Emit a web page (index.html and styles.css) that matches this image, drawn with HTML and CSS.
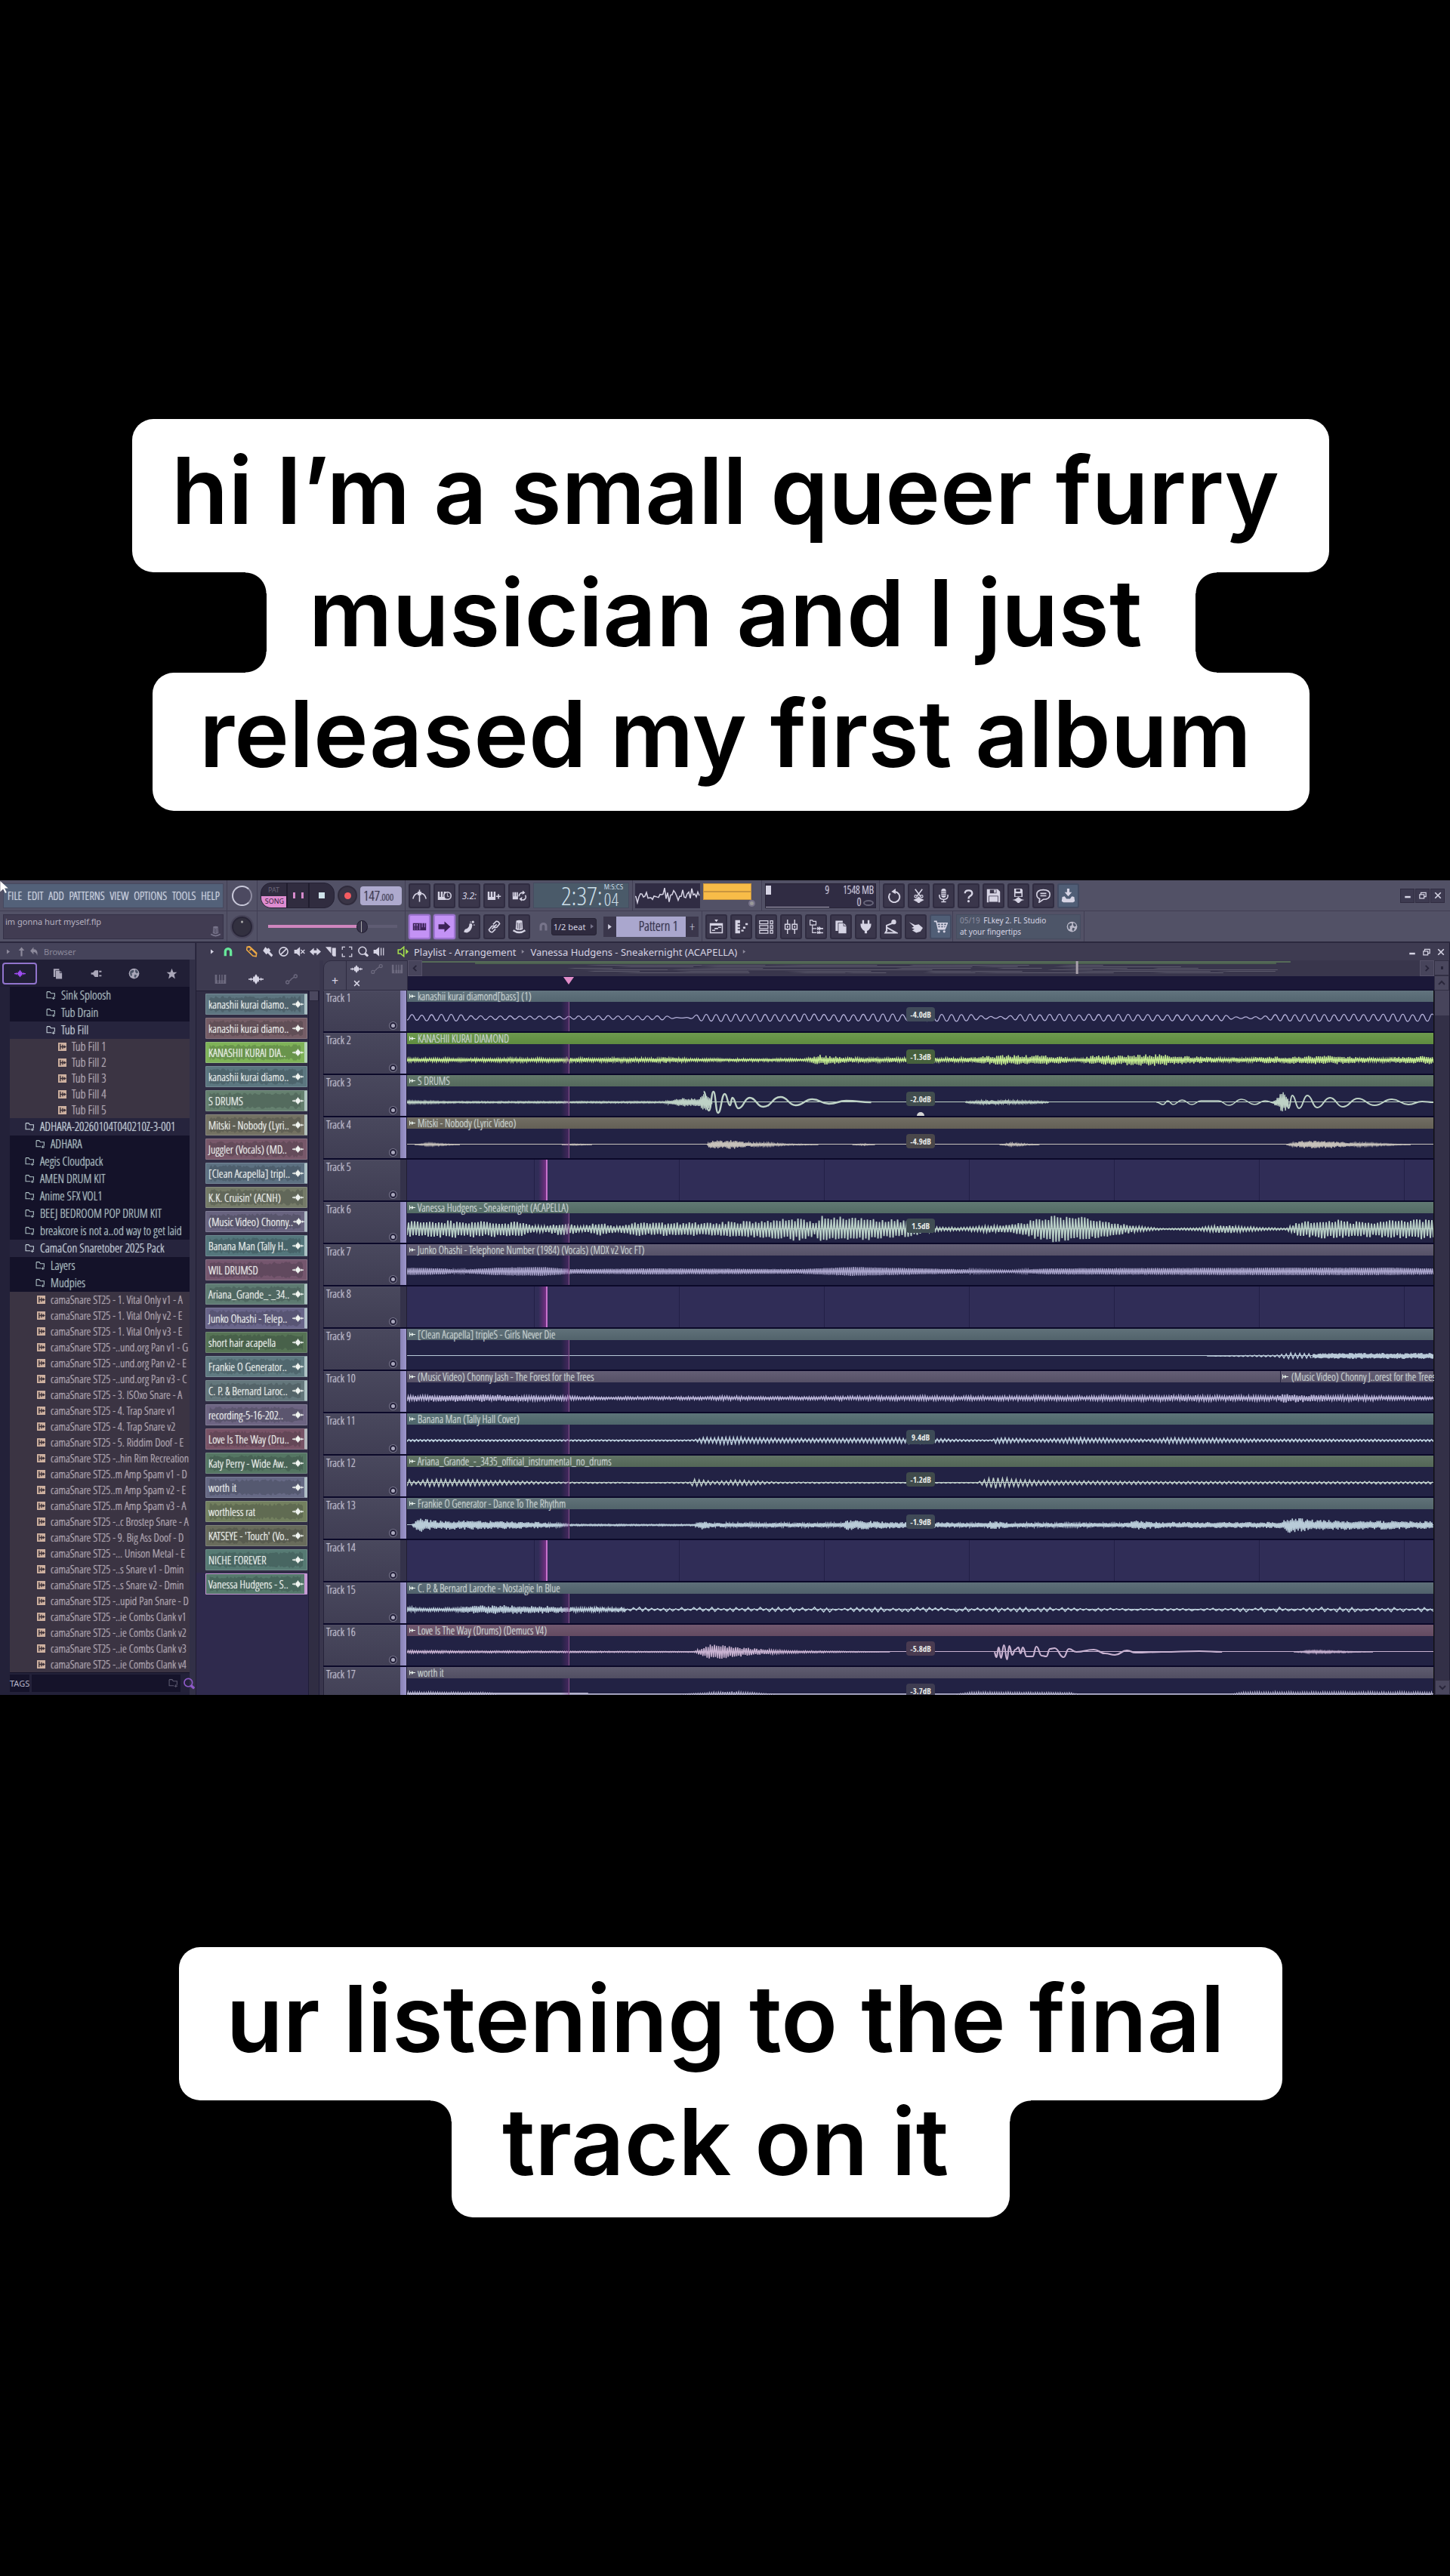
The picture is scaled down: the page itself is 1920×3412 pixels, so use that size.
FILE: index.html
```html
<!DOCTYPE html>
<html lang="en">
<head>
<meta charset="utf-8">
<title>Playlist - Arrangement</title>
<link rel="stylesheet" href="styles.css">
</head>
<body>
<svg class="sprite" aria-hidden="true">
  <symbol id="wave" viewBox="0 0 24 16"><path d="M0 7h3l1-2 1 2h2l1-4 1 2 1-2 2-3 2 3 1 2 1-2 1 4h2l1-2 1 2h3v2h-3l-1 2-1-2h-2l-1 4-1-2-1 2-2 3-2-3-1-2-1 2-1-4H5l-1 2-1-2H0z"/></symbol>
  <symbol id="keys" viewBox="0 0 24 20"><path d="M1 1h22v18H1z M5 1v11h1v6h2v-6h1V1z M11 1v11h1v6h1v-6h1V1z M16 1v11h1v6h1v-6h1V1z" fill-rule="evenodd"/></symbol>
  <symbol id="auto" viewBox="0 0 24 20"><g fill="none" stroke="currentColor" stroke-width="2"><circle cx="4" cy="16" r="3"/><circle cx="20" cy="4" r="3"/><path d="M7 14l4-3v-1l6-4"/></g></symbol>
  <symbol id="metro" viewBox="0 0 24 24"><path d="M11 2h2v3h2v6h-2v11h-2V11H9V5h2z"/><path d="M1 17q2-8 8-9M23 17q-2-8-8-9" fill="none" stroke="currentColor" stroke-width="2"/></symbol>
  <symbol id="waitkey" viewBox="0 0 24 24"><path d="M1 5h13v14H1z M4 5v9h2V5zM9 5v9h2V5z" fill-rule="evenodd"/><circle cx="17" cy="12" r="6" fill="#3a364b" stroke="currentColor" stroke-width="2"/><path d="M17 8v5h3" fill="none" stroke="currentColor" stroke-width="1"/></symbol>
  <symbol id="keyplus" viewBox="0 0 24 24"><path d="M1 5h13v14H1z M4 5v9h2V5zM9 5v9h2V5z" fill-rule="evenodd"/><path d="M18 9h2v3h3v2h-3v3h-2v-3h-3v-2h3z"/></symbol>
  <symbol id="keyloop" viewBox="0 0 24 24"><path d="M1 6h9v12H1z M3 6v7h1V6zM7 6v7h1V6z" fill-rule="evenodd"/><path d="M12 13a5 5 0 0 1 8-5M22 11a5 5 0 0 1-8 6" fill="none" stroke="currentColor" stroke-width="2"/><path d="M18 3l4 4-5 3zM16 21l-4-4 5-3z"/></symbol>
  <symbol id="padkeys" viewBox="0 0 24 24"><path d="M1 6h22v12H1z M3 8v2h2V8zM7 8v2h2V8zM3 12v1h2v-1zM7 12v1h2v-1zM3 15v1h2v-1zM7 15v1h2v-1zM12 7v10h1V7zM16 6v7h1V6zM20 6v7h1V6z" fill-rule="evenodd"/></symbol>
  <symbol id="arrow" viewBox="0 0 24 24"><path d="M2 8h10V3l10 9-10 9v-5H2z"/></symbol>
  <symbol id="foot" viewBox="0 0 24 24"><path d="M3 21q0-5 5-6 4-2 4-8 4-2 5 2-1 10-9 13z"/><circle cx="14" cy="4" r="1"/><circle cx="18" cy="4" r="2"/><circle cx="20" cy="9" r="1"/></symbol>
  <symbol id="link" viewBox="0 0 24 24"><g fill="none" stroke="currentColor" stroke-width="2"><path d="M10 8l5-5q4-1 6 4l-5 6q-3 1-5 0M14 16l-5 5q-4 1-6-4l5-6q3-1 5 0M8 16l8-8"/></g></symbol>
  <symbol id="hat" viewBox="0 0 24 24"><path d="M7 2q5-2 10 0l1 14q-6 3-12 0z"/><path d="M2 18q10 7 20 0" fill="none" stroke="currentColor" stroke-width="3"/><path d="M9 5v10M12 6v10M15 5v10" stroke="#3a364b" stroke-width="1"/></symbol>
  <symbol id="magnet" viewBox="0 0 24 24"><path d="M4 20V11a8 8 0 0 1 16 0v9h-5v-9a3 3 0 0 0-6 0v9z"/></symbol>
  <symbol id="playlist" viewBox="0 0 24 24"><path d="M9 0h6l-3 4zM1 6h22v17H1z M3 10v11h18V10z" fill-rule="evenodd"/><path d="M5 17h5v2H5zM9 14h6v2H9zM15 12h5v2h-5z"/></symbol>
  <symbol id="roll" viewBox="0 0 24 24"><path d="M2 1h8v5H6v2h4v3H6v2h4v3H6v2h4v5H2zM12 17h4v3h-4zM15 12h4v3h-4zM19 6h4v3h-4z"/></symbol>
  <symbol id="rack" viewBox="0 0 24 24"><path d="M1 2h14v5H1zM1 10h14v5H1zM1 18h14v5H1zM19 2h4v5h-4zM19 10h4v5h-4zM19 18h4v5h-4z" fill="none" stroke="currentColor" stroke-width="1.6"/></symbol>
  <symbol id="mixer" viewBox="0 0 24 24"><path d="M6 0v8M6 16v8M18 0v8M18 16v8M2 8h8v8H2zM14 8h8v8h-8zM6 10v4M18 10v4" fill="none" stroke="currentColor" stroke-width="1.8"/></symbol>
  <symbol id="tree" viewBox="0 0 24 24"><path d="M2 1h4l1 2h5v6H2zM6 9v13h7M6 15h7" fill="none" stroke="currentColor" stroke-width="1.5"/><path d="M14 12l3 2v-3l3 3h4v2h-4l-3 3v-3l-3 2zM14 19l3 2v-3l3 3h4v2h-4l-3 1v-1l-3 1z"/></symbol>
  <symbol id="copy" viewBox="0 0 24 24"><path d="M3 2h12v3H7v14H3z"/><path d="M8 6h8v5h5v12H8zM17 6l4 4h-4z"/></symbol>
  <symbol id="plug" viewBox="0 0 24 24"><path d="M6 1h3v6h6V1h3v6h3q0 9-7 12v4h-4v-4Q3 16 3 7h3z"/></symbol>
  <symbol id="toy" viewBox="0 0 24 24"><circle cx="17" cy="4" r="4"/><path d="M15 6L5 10v8M5 13l16 9H3l3-5" fill="none" stroke="currentColor" stroke-width="2.5"/></symbol>
  <symbol id="hand" viewBox="0 0 24 24"><path d="M1 4l10 5 6-1 7 6-4 6-7 2-7-4 4-2-5-2 4-2z"/></symbol>
  <symbol id="cart" viewBox="0 0 24 24"><path d="M1 3h4l3 13h12M6 6h17l-3 8H8M12 6v8M17 6v8M7 10h14" fill="none" stroke="currentColor" stroke-width="2"/><circle cx="9" cy="20" r="2"/><circle cx="18" cy="20" r="2"/></symbol>
  <symbol id="undo" viewBox="0 0 24 24"><path d="M14 5a9 9 0 1 1-8 3" fill="none" stroke="currentColor" stroke-width="2.5"/><path d="M8 5l7-5v9z"/></symbol>
  <symbol id="cut" viewBox="0 0 24 24"><path d="M6 1l9 12M18 1L9 13" stroke="currentColor" stroke-width="2"/><circle cx="7" cy="13" r="2" fill="none" stroke="currentColor" stroke-width="1.5"/><circle cx="17" cy="13" r="2" fill="none" stroke="currentColor" stroke-width="1.5"/><path d="M3 19l4-2 2-1 3-3 3 3 2 1 4 2-4 2-2 1-3 3-3-3-2-1z"/></symbol>
  <symbol id="mic" viewBox="0 0 24 24"><rect x="8" y="0" width="8" height="15" rx="4"/><path d="M5 10v3q1 5 7 5t7-5v-3M12 18v4M8 22h8" fill="none" stroke="currentColor" stroke-width="2"/><path d="M8 5h8M8 8h8M8 11h8" stroke="#3a364b" stroke-width="1"/></symbol>
  <symbol id="help" viewBox="0 0 24 24"><path d="M6 8q0-5 6-5t6 5q0 3-4 5-2 1-2 4" fill="none" stroke="currentColor" stroke-width="3"/><circle cx="12" cy="21" r="2"/></symbol>
  <symbol id="save" viewBox="0 0 24 24"><path d="M1 1h18l4 4v18H1z M6 2v6h11V2z M4 12v11h16V12z" fill-rule="evenodd"/><path d="M13 2h3v5h-3zM5 13h14v9H5z"/></symbol>
  <symbol id="savewave" viewBox="0 0 24 24"><path d="M5 0h12l2 2v12H5z M8 1v4h7V1z M7 8v5h10V8z" fill-rule="evenodd"/><path d="M2 19l4-1 2-1 1-1 3-2 3 2 1 1 2 1 4 1-4 1-2 1-1 1-3 3-3-3-1-1-2-1z"/></symbol>
  <symbol id="chat" viewBox="0 0 24 24"><path d="M12 2c7 0 11 3 11 8s-4 8-11 8l-7 5 1-6q-5-2-5-7c0-5 4-8 11-8z M7 8h10M7 12h10" fill="none" stroke="currentColor" stroke-width="2"/></symbol>
  <symbol id="down" viewBox="0 0 24 24"><path d="M10 0h4v6h4l-6 7-6-7h4zM2 14l4-1 3 4h6l3-4 4 1 1 7-3 2H4l-3-2z"/></symbol>
  <symbol id="globe" viewBox="0 0 24 24"><circle cx="12" cy="12" r="11"/><path d="M4 7q5-4 8-2l-1 4-4 2 1 4-2 3q-4-5-2-11zM15 3q5 2 6 7l-4 2-3-4zM13 14l5 1-3 6-3-2z" fill="#4d5568"/></symbol>
  <symbol id="folder" viewBox="0 0 24 24"><path d="M2 3h7l3 4h9v9M2 3v15h11M18 15v7M14 19h8" fill="none" stroke="currentColor" stroke-width="2"/></symbol>
  <symbol id="sample" viewBox="0 0 24 24"><path d="M0 0h24v24H0z"/><path d="M6 4v16M6 12h15M13 6v12M17 9l4 3-4 3" fill="none" stroke="#3b3038" stroke-width="3"/></symbol>
  <symbol id="clip" viewBox="0 0 16 12"><path d="M0 0h2v4l4 1V1l5 4h5v2h-5l-5 4V7L2 8v4H0z"/></symbol>
  <symbol id="speaker" viewBox="0 0 24 24"><path d="M2 8h5l7-6v20l-7-6H2z" fill="none" stroke="currentColor" stroke-width="2.5"/><path d="M18 6l6 6-6 6z"/></symbol>
  <symbol id="pencil" viewBox="0 0 24 24"><path d="M2 2l5-1 15 14-1 7-7-1L1 8zM2 2l6 1 14 14M7 10l5-5" fill="none" stroke="currentColor" stroke-width="2.5"/></symbol>
  <symbol id="brush" viewBox="0 0 24 24"><path d="M2 10l5-8 4 4 3-2 4 5-2 3 7 7-3 4-8-8-3 3z"/></symbol>
  <symbol id="ban" viewBox="0 0 24 24"><path d="M19 5L5 19" stroke="currentColor" stroke-width="2.5"/><circle cx="12" cy="12" r="9" fill="none" stroke="currentColor" stroke-width="2.5"/></symbol>
  <symbol id="mute" viewBox="0 0 24 24"><path d="M1 8h5l7-6v20l-7-6H1z"/><path d="M15 8l8 8M23 8l-8 8" stroke="currentColor" stroke-width="2"/></symbol>
  <symbol id="slip" viewBox="0 0 24 24"><path d="M0 12l9-8v5h6V4l9 8-9 8v-5H9v5z"/></symbol>
  <symbol id="slice" viewBox="0 0 24 24"><path d="M0 2h12v14zM14 4h8v18h-5l-3-3z"/></symbol>
  <symbol id="select" viewBox="0 0 24 24"><path d="M8 2H2v6M16 2h6v6M8 22H2v-6M16 22h6v-6" fill="none" stroke="currentColor" stroke-width="2"/></symbol>
  <symbol id="lens" viewBox="0 0 24 24"><circle cx="11" cy="10" r="8" fill="none" stroke="currentColor" stroke-width="2.5"/><path d="M15 17l6 5 2-2-5-5" stroke="currentColor" stroke-width="2"/></symbol>
  <symbol id="playwave" viewBox="0 0 24 24"><path d="M1 8h5l7-6v20l-7-6H1zM16 4h2v16h-2zM21 4h2v16h-2z"/></symbol>
  <symbol id="plugtab" viewBox="0 0 24 24"><path d="M1 10h4l4-5h7v14H9l-4-5H1zM18 6h5v3h-5zM18 15h5v3h-5z"/></symbol>
  <symbol id="star" viewBox="0 0 24 24"><path d="M12 1l3 8h8l-6 5 2 9-7-5-7 5 2-9-6-5h8z"/></symbol>
  <symbol id="min" viewBox="0 0 24 24"><path d="M3 14h18v6H3z"/></symbol>
  <symbol id="restore" viewBox="0 0 24 24"><path d="M2 9h14v12H2zM6 8V3h16v13h-5" fill="none" stroke="currentColor" stroke-width="3"/></symbol>
  <symbol id="close" viewBox="0 0 24 24"><path d="M3 3l18 18M21 3L3 21" stroke="currentColor" stroke-width="4"/></symbol>
  <symbol id="up" viewBox="0 0 24 24"><path d="M12 1l7 8h-5v14h-4V9H5z"/></symbol>
  <symbol id="back" viewBox="0 0 24 24"><path d="M10 1v5q12 0 9 16-2-9-9-9v6L2 10z"/></symbol>
  <symbol id="tri" viewBox="0 0 12 12"><path d="M2 0l8 6-8 6z"/></symbol>
  <symbol id="chev" viewBox="0 0 12 12"><path d="M4 2l4 4-4 4" fill="none" stroke="currentColor" stroke-width="2"/></symbol>
</svg>

<section class="caption caption-top">
  <span class="line line-1">hi I’m a small queer furry</span>
  <span class="line line-2 notch">musician and I just</span>
  <span class="line line-3">released my first album</span>
</section>

<main class="app">
  <svg class="cursor" viewBox="0 0 12 18" aria-hidden="true"><path d="M0 0v15l4-4 3 6 2-1-3-6h5z" fill="#fff"/></svg>
  <header class="toolbar">
    <div class="bar">
      <div class="group g-menu">
        <nav class="menu"><a href="#">FILE</a><a href="#">EDIT</a><a href="#">ADD</a><a href="#">PATTERNS</a><a href="#">VIEW</a><a href="#">OPTIONS</a><a href="#">TOOLS</a><a href="#">HELP</a></nav>
      </div>
      <div class="group g-knob"><span class="knob knob-main"></span></div>
      <div class="group g-transport">
        <div class="transport">
          <button class="mode"><span>PAT</span><b>SONG</b></button>
          <button class="pause" aria-label="Pause"></button>
          <button class="stop" aria-label="Stop"></button>
        </div>
        <button class="record" aria-label="Record"></button>
        <output class="tempo">147<small>.000</small></output>
      </div>
      <div class="group g-btns">
        <button class="tb" aria-label="Metronome"><svg><use href="#metro"/></svg></button>
        <button class="tb" aria-label="Wait for input"><svg><use href="#waitkey"/></svg></button>
        <button class="tb count">3.2:</button>
        <button class="tb" aria-label="Blend notes"><svg><use href="#keyplus"/></svg></button>
        <button class="tb" aria-label="Loop record"><svg><use href="#keyloop"/></svg></button>
        <output class="clock">2:37:<span><small>M:S:CS</small><i>04</i></span></output>
      </div>
      <div class="group g-scope">
        <svg class="scope" viewBox="0 0 86 33" preserveAspectRatio="none"></svg>
        <div class="meters"><i></i><i></i><span class="dial"></span></div>
      </div>
      <div class="group g-cpu">
        <div class="cpu">
          <div class="cpu-load"><i></i><span>9</span></div>
          <div class="cpu-mem"><span>1548 MB</span><span>0 <em></em></span></div>
        </div>
      </div>
      <div class="group g-tools">
        <button class="tb" aria-label="Undo"><svg><use href="#undo"/></svg></button>
        <button class="tb" aria-label="Cut"><svg><use href="#cut"/></svg></button>
        <button class="tb" aria-label="Record audio"><svg><use href="#mic"/></svg></button>
        <button class="tb" aria-label="Help"><svg><use href="#help"/></svg></button>
        <button class="tb" aria-label="Save"><svg><use href="#save"/></svg></button>
        <button class="tb" aria-label="Export"><svg><use href="#savewave"/></svg></button>
        <button class="tb" aria-label="Messages"><svg><use href="#chat"/></svg></button>
        <button class="tb teal" aria-label="Download"><svg><use href="#down"/></svg></button>
      </div>
      <div class="window-btns">
        <button aria-label="Minimize"><svg><use href="#min"/></svg></button>
        <button aria-label="Restore"><svg><use href="#restore"/></svg></button>
        <button aria-label="Close"><svg><use href="#close"/></svg></button>
      </div>
    </div>
    <div class="bar">
      <div class="group g-menu"><div class="hint">im gonna hurt myself.flp<svg><use href="#hat"/></svg></div></div>
      <div class="group g-knob"><span class="knob"></span></div>
      <div class="group g-transport"><input class="pos" type="range" min="0" max="100" value="75" aria-label="Song position"></div>
      <div class="group g-pattern">
        <button class="tb lit" aria-label="Typing keyboard"><svg><use href="#padkeys"/></svg></button>
        <button class="tb lit" aria-label="Follow playback"><svg><use href="#arrow"/></svg></button>
        <button class="tb" aria-label="Step edit"><svg><use href="#foot"/></svg></button>
        <button class="tb" aria-label="Link"><svg><use href="#link"/></svg></button>
        <button class="tb" aria-label="Magic hat"><svg><use href="#hat"/></svg></button>
        <svg class="snap-icon"><use href="#magnet"/></svg>
        <button class="snap">1/2 beat<svg><use href="#tri"/></svg></button>
        <div class="pattern"><button aria-label="Pattern menu"><svg><use href="#tri"/></svg></button><span>Pattern 1</span><button>+</button></div>
      </div>
      <div class="group g-panels">
        <button class="tb" aria-label="Playlist"><svg><use href="#playlist"/></svg></button>
        <button class="tb" aria-label="Piano roll"><svg><use href="#roll"/></svg></button>
        <button class="tb" aria-label="Channel rack"><svg><use href="#rack"/></svg></button>
        <button class="tb" aria-label="Mixer"><svg><use href="#mixer"/></svg></button>
        <button class="tb" aria-label="Browser"><svg><use href="#tree"/></svg></button>
        <button class="tb" aria-label="Plugin database"><svg><use href="#copy"/></svg></button>
        <button class="tb" aria-label="Plugins"><svg><use href="#plug"/></svg></button>
        <button class="tb" aria-label="Tempo tapper"><svg><use href="#toy"/></svg></button>
        <button class="tb" aria-label="Touch"><svg><use href="#hand"/></svg></button>
        <button class="tb teal" aria-label="Shop"><svg><use href="#cart"/></svg></button>
      </div>
      <div class="group g-news"><a class="news" href="#"><span><em>05/19</em> FLkey 2. FL Studio<br>at your fingertips</span><svg><use href="#globe"/></svg></a></div>
    </div>
  </header>

  <div class="work">
    <aside class="browser">
      <div class="browser-head"><svg class="s10"><use href="#tri"/></svg><svg class="s13"><use href="#up"/></svg><svg class="s13"><use href="#back"/></svg><span>Browser</span></div>
      <div class="browser-tabs">
        <button class="on" aria-label="Sounds"><svg><use href="#wave"/></svg></button>
        <button aria-label="Files"><svg><use href="#copy"/></svg></button>
        <button aria-label="Plugins"><svg><use href="#plugtab"/></svg></button>
        <button aria-label="Online"><svg><use href="#globe"/></svg></button>
        <button aria-label="Starred"><svg><use href="#star"/></svg></button>
      </div>
      <ul class="files"></ul>
      <div class="tags"><button>TAGS</button><label><input type="text" aria-label="Search tags"><svg><use href="#folder"/></svg></label><button class="find" aria-label="Find"><svg><use href="#lens"/></svg></button></div>
    </aside>

    <section class="playlist">
      <div class="titlebar">
        <svg class="s10"><use href="#tri"/></svg>
        <svg class="mint"><use href="#magnet"/></svg>
        <div class="tools">
          <svg class="amber"><use href="#pencil"/></svg><svg><use href="#brush"/></svg><svg><use href="#ban"/></svg><svg><use href="#mute"/></svg><svg><use href="#slip"/></svg><svg><use href="#slice"/></svg><svg><use href="#select"/></svg><svg><use href="#lens"/></svg><svg><use href="#playwave"/></svg>
        </div>
        <svg class="lime"><use href="#speaker"/></svg>
        <h1>Playlist - Arrangement <svg><use href="#tri"/></svg> Vanessa Hudgens - Sneakernight (ACAPELLA) <svg><use href="#tri"/></svg></h1>
        <div class="title-btns"><svg><use href="#min"/></svg><svg><use href="#restore"/></svg><svg><use href="#close"/></svg></div>
      </div>
      <div class="panes">
        <div class="picker">
          <div class="picker-tabs"><svg class="dim"><use href="#keys"/></svg><svg><use href="#wave"/></svg><svg class="dim"><use href="#auto"/></svg></div>
          <div class="picker-body"><ul class="clips"></ul><div class="picker-scroll"><i></i></div></div>
        </div>
        <div class="arrange">
          <div class="arrange-head">
            <div class="corner">
              <button>+</button>
              <div class="corner-grid"><svg><use href="#wave"/></svg><svg class="dim"><use href="#auto"/></svg><svg class="dim"><use href="#keys"/></svg><svg class="x"><use href="#close"/></svg></div>
            </div>
            <div class="timeline">
              <div class="minimap"><button aria-label="Scroll left"><svg class="flip"><use href="#chev"/></svg></button><svg class="map" viewBox="0 0 1320 21" preserveAspectRatio="none"></svg><button aria-label="Scroll right"><svg><use href="#chev"/></svg></button></div>
              <div class="ruler"><i class="marker"></i></div>
            </div>
            <div class="scroll-top"><button aria-label="Zoom"><b></b></button><button aria-label="Scroll up"><svg class="rot-up"><use href="#chev"/></svg></button></div>
          </div>
          <div class="arrange-body">
            <div class="tracks"></div>
            <div class="vscroll"><i></i><button aria-label="Scroll down"><svg class="rot-down"><use href="#chev"/></svg></button></div>
          </div>
        </div>
      </div>
    </section>
  </div>
</main>

<section class="caption caption-bottom">
  <span class="line line-4">ur listening to the final</span>
  <span class="line line-5 notch">track on it</span>
</section>
<script src="script.js"></script>
</body>
</html>
```
FILE: styles.css
```css
:root {
  --narrow: "Open Sans Condensed Light", "Open Sans Condensed", "Liberation Sans Narrow", "Noto Sans", sans-serif;
  --narrow-bold: "Open Sans Condensed", "Liberation Sans Narrow", "Noto Sans", sans-serif;
  --ui: "Noto Sans", sans-serif;
  --bar: #525166;
  --panel: #3d3a50;
  --ink: #d6d4e4;
}
* { box-sizing: border-box; }
body { margin: 0; background: #000; font-family: var(--ui); font-size: 12px; color: var(--ink); }
svg { fill: currentColor; display: block; flex: none; }
.sprite { display: none; }
button { border: 0; padding: 0; margin: 0; font: inherit; color: inherit; background: none; display: flex; align-items: center; justify-content: center; }
ul { list-style: none; margin: 0; padding: 0; }
a { color: inherit; text-decoration: none; }

/* captions */
.caption { display: flex; flex-direction: column; align-items: center; padding-left: 15px; color: #000; font-family: Inter, sans-serif; font-weight: 600; font-size: 123px; line-height: 161px; white-space: nowrap; }
.caption-top { padding-top: 555px; padding-bottom: 92px; }
.caption-bottom { padding-top: 334px; padding-bottom: 475px; }
.line { position: relative; background: #fff; border-radius: 28px; text-align: center; padding-right: 14px; }
.line-1 { width: 1585px; height: 203px; padding-top: 14px; }
.line-2 { width: 1230px; height: 133px; line-height: 107px; border-radius: 0; }
.line-3 { width: 1532px; height: 183px; line-height: 162px; }
.line-4 { width: 1461px; height: 203px; padding-top: 14px; }
.line-5 { width: 739px; height: 155px; line-height: 109px; border-radius: 0 0 28px 28px; }
.notch::before, .notch::after { content: ""; position: absolute; top: 0; bottom: 0; width: 28px; }
.notch::before { right: 100%; background: radial-gradient(circle at 0 28px, transparent 27px, #fff 28px) top / 28px 28px no-repeat, radial-gradient(circle at 0 0, transparent 27px, #fff 28px) bottom / 28px 28px no-repeat; }
.notch::after { left: 100%; background: radial-gradient(circle at 100% 28px, transparent 27px, #fff 28px) top / 28px 28px no-repeat, radial-gradient(circle at 100% 0, transparent 27px, #fff 28px) bottom / 28px 28px no-repeat; }
.line-5::before, .line-5::after { bottom: auto; height: 28px; background-size: 28px 28px, 0 0; }

/* app frame */
.app { position: relative; height: 1079px; overflow: hidden; display: flex; flex-direction: column; background: var(--panel); }
.cursor { position: absolute; left: 0; top: 1px; width: 12px; height: 17px; z-index: 3; }
.toolbar { background: var(--bar); border-bottom: 2px solid #2b283e; }
.bar { display: flex; height: 41px; border-bottom: 1px solid #413e54; }
.bar:last-child { height: 40px; border: 0; }
.group { display: flex; align-items: center; gap: 4px; border-right: 1px solid #413e54; padding: 0 4px; flex: none; }
.g-menu { width: 301px; }
.g-knob { width: 40px; justify-content: center; }
.g-transport { width: 196px; }
.g-btns { width: 301px; gap: 4px; }
.g-scope { width: 171px; padding: 0 3px; }
.g-cpu { width: 156px; }
.g-tools { border: 0; }
.g-pattern { width: 393px; }
.g-panels { width: 332px; padding-right: 0; }
.g-news { width: 174px; }
.menu, .cpu, .tempo, .pattern, .files, .clips, .tracks { text-shadow: 0 0 1px currentColor; }
.menu { flex: 1; height: 33px; display: flex; align-items: center; justify-content: space-between; padding: 0 4px 0 5px; background: #536179; border: 1px solid #46495f; font: 300 15px/20px var(--narrow); color: #d5dbe6; }
.hint { flex: 1; height: 33px; display: flex; justify-content: space-between; align-items: flex-start; padding: 1px 2px; background: #413c52; border: 1px solid #353147; font-size: 11px; line-height: 16px; color: #b5b1c0; }
.hint svg { width: 15px; height: 17px; margin-top: 12px; color: #77738a; }
.knob { width: 27px; height: 27px; border-radius: 50%; background: radial-gradient(circle at 50% 22%, #aaa 0 1px, transparent 2px), #32303f; border: 2px solid #292638; box-shadow: 0 0 0 2px #474459; }
.knob-main { background: #4c4960; border: 2px solid #c9c9da; border-right-color: #8e8ca0; box-shadow: none; }
.transport { display: flex; width: 99px; height: 34px; border-radius: 14px; overflow: hidden; background: #302c3f; border: 1px solid #252235; }
.mode { width: 33px; flex-direction: column; font-size: 9px; line-height: 14px; color: #696477; }
.mode b { font-weight: 400; color: #302338; background: #de8cd0; width: 100%; height: 15px; padding-left: 2px; }
.mode span { height: 17px; line-height: 18px; }
.pause { width: 31px; border-left: 2px solid #201d2e; border-right: 2px solid #201d2e; }
.pause::before { content: ""; width: 8px; height: 8px; border: solid #d68acb; border-width: 0 3px; }
.stop { flex: 1; }
.stop::before { content: ""; width: 8px; height: 8px; background: #cfe3ea; }
.record { width: 26px; height: 26px; border-radius: 50%; background: #3a3546; border: 2px solid #2f2b3c; }
.record::before { content: ""; width: 9px; height: 9px; border-radius: 50%; background: #f45c61; }
.tempo { width: 55px; height: 25px; border-radius: 4px; background: #aeaace; color: #373349; padding-left: 4px; font: 300 18px/24px var(--narrow); }
.tempo small { font-size: 13px; }
.tb { width: 29px; height: 33px; flex: none; border-radius: 3px; background: #3a364b; border: 2px solid #302c41; color: var(--ink); }
.tb svg { width: 19px; height: 19px; }
.tb.lit { background: #c392f5; border-color: #9d74d0; color: #3d2358; box-shadow: 0 0 2px #a77be0; }
.tb.teal { background: #505e76; border-color: #434b62; }
.count { font-style: italic; font-size: 12px; }
.clock { flex: 1; height: 34px; display: flex; background: #4a5a69; border: 1px solid #454c60; color: #ccdfe8; font: 300 34px/32px var(--narrow); padding-left: 36px; white-space: nowrap; }
.clock span { display: flex; flex-direction: column; margin-left: 2px; }
.clock small { font: 400 8px/9px var(--ui); }
.clock i { font-style: normal; font-size: 24px; line-height: 23px; }
.scope { width: 86px; height: 33px; background: #302c43; color: var(--ink); }
.meters { width: 72px; height: 33px; }
.meters i { display: block; width: 64px; height: 11px; background: #f8bc48; border: 1px solid #c9963f; }
.dial { display: block; width: 9px; height: 9px; border-radius: 50%; background: #999; border: 2px solid #77738a; margin-left: 60px; }
.cpu { display: flex; flex: 1; height: 33px; background: #302c43; border: 1px solid #292538; font: 300 14px/16px var(--narrow); }
.cpu-load { width: 84px; display: flex; justify-content: space-between; border-bottom: 1px solid #aaa7ba; }
.cpu-load i { width: 7px; height: 12px; background: var(--ink); margin-top: 2px; }
.cpu-mem { flex: 1; text-align: right; padding-right: 2px; }
.cpu-mem span { display: block; white-space: nowrap; }
.cpu-mem em { display: inline-block; width: 14px; height: 8px; border-radius: 50%; border: 2px solid #67657a; }
.window-btns { display: flex; align-items: center; gap: 1px; margin-left: auto; padding-right: 7px; }
.window-btns button { width: 19px; height: 19px; background: #3d3a50; border: 1px solid #302c41; }
.window-btns svg { width: 10px; height: 10px; }
.pos { appearance: none; width: 171px; height: 26px; margin: 0 0 0 10px; background: linear-gradient(90deg, #cf86be 75%, #5f5c73 0) center / 100% 4px no-repeat; }
.pos::-webkit-slider-thumb { appearance: none; width: 15px; height: 17px; border-radius: 50%; background: linear-gradient(90deg, transparent 5px, #aaa 5px 6px, transparent 6px), #37334a; border: 1px solid #242133; }
.snap-icon { width: 15px; height: 17px; margin: 0 3px 0 6px; color: #77748a; }
.snap { width: 62px; height: 23px; margin-left: -4px; gap: 6px; background: #2e2a3e; border: 1px solid #252233; border-radius: 3px; font-size: 11px; white-space: nowrap; }
.snap svg { width: 6px; height: 8px; color: #77748a; }
.pattern { display: flex; width: 130px; height: 27px; margin-left: 5px; background: #aaa7ce; border-radius: 3px; color: #34304a; font: 300 18px/25px var(--narrow); }
.pattern span { flex: 1; text-align: right; padding-right: 10px; }
.pattern button { width: 17px; background: #3a364b; color: var(--ink); }
.pattern svg { width: 7px; height: 9px; }
.news { display: flex; align-items: center; justify-content: space-between; width: 166px; height: 33px; padding: 0 3px 0 4px; background: #4d5568; border: 1px solid #464d60; font-size: 10px; line-height: 15px; white-space: nowrap; }
.news em { font-style: normal; color: #8e8fa1; margin-right: 2px; }
.news svg { width: 15px; height: 15px; color: #b9b8c8; }

/* browser */
.work { flex: 1; min-height: 0; display: flex; }
.browser { width: 259px; flex: none; background: #232139; border-right: 8px solid #323047; display: flex; flex-direction: column; }
.s10 { width: 6px; height: 9px; }
.s13 { width: 13px; height: 13px; }
.browser-head { height: 22px; margin-right: -7px; background: #45435a; display: flex; align-items: center; gap: 4px; padding-left: 8px; color: #8c899b; font-size: 11px; }
.browser-head .s10 { margin-right: 4px; }
.browser-head span { margin-left: 2px; }
.browser-tabs { display: flex; height: 36px; align-items: center; gap: 4px; padding-left: 3px; color: #aaa7b9; background: #211f36; }
.browser-tabs button { width: 47px; height: 29px; border: 1px solid transparent; border-radius: 4px; }
.browser-tabs .on { border: 2px solid #9174cd; color: #9d4cf0; }
.browser-tabs svg { width: 15px; height: 15px; }
.files { flex: 1; min-height: 0; margin-left: 13px; overflow: hidden; background: #141229; }
.files li { display: flex; align-items: center; gap: 7px; white-space: nowrap; overflow: hidden; height: 23px; padding-left: 20px; color: #adc0c3; font: 300 16px/21px var(--narrow); }
.files svg { width: 13px; height: 13px; }
.files .d1 { padding-left: 34px; }
.files .d2 { padding-left: 48px; }
.files .open { background: #26243d; color: #c6d2da; }
.files .file { height: 21px; padding-left: 36px; background: #3b3443; color: #b4abb5; font-size: 15px; }
.files .file svg { width: 11px; height: 11px; color: #ceb1a0; }
.files .deep { padding-left: 64px; font-size: 16px; }
.tags { height: 27px; margin-bottom: 2px; padding: 2px 2px 2px 13px; display: flex; gap: 3px; color: #b9b7ca; font-size: 11px; }
.tags button { width: 41px; background: #15132a; }
.tags label { flex: 1; display: flex; align-items: center; background: #15132a; padding-right: 3px; color: #5c5a70; }
.tags input { flex: 1; min-width: 0; border: 0; background: none; }
.tags svg { width: 13px; height: 13px; }
.tags .find { width: 20px; background: none; color: #8e5ac8; }
.find svg { width: 16px; height: 16px; }

/* playlist */
.playlist { flex: 1; min-width: 0; display: flex; flex-direction: column; border-left: 1px solid #201d33; border-right: 1px solid #201d33; }
.titlebar { height: 23px; display: flex; align-items: center; padding-left: 18px; background: #3e3b51; }
.titlebar .mint { width: 16px; height: 16px; margin: 0 16px 0 10px; color: #67e79a; }
.tools { display: flex; gap: 6px; }
.tools svg { width: 15px; height: 15px; }
.tools .amber { color: #eda844; }
.titlebar .lime { width: 15px; height: 15px; margin-left: 17px; color: #a4e04c; }
.titlebar h1 { margin: 0 0 0 7px; display: flex; align-items: center; gap: 7px; font-weight: 400; font-size: 13px; line-height: 20px; }
.titlebar h1 svg { width: 5px; height: 7px; color: #8c899b; }
.title-btns { margin-left: auto; display: flex; gap: 9px; padding-right: 6px; }
.title-btns svg { width: 10px; height: 10px; }
.panes { flex: 1; min-height: 0; display: flex; }
.picker { width: 163px; flex: none; display: flex; flex-direction: column; }
.picker-tabs { height: 40px; display: flex; align-items: center; justify-content: space-between; padding: 10px 29px 0 24px; }
.picker-tabs svg { width: 16px; height: 14px; }
.picker-tabs svg:nth-child(2) { width: 20px; height: 14px; }
.dim { color: #6c697e; }
.picker-body { flex: 1; min-height: 0; display: flex; background: #2f2a4d; }
.clips { flex: 1; min-width: 0; padding: 3px 1px 132px 12px; border-top: 1px solid #201d33; display: flex; flex-direction: column; gap: 4px; background: linear-gradient(#302d44 770px, #2f2a4d 0); }
.clips li { position: relative; height: 28px; display: flex; align-items: center; justify-content: space-between; padding: 0 4px 0 3px; background: var(--c); border: 1px solid rgba(200, 210, 220, .22); border-radius: 1px; color: #f0f4f0; font: 300 15px/26px var(--narrow); white-space: nowrap; }
.clips li.used { border-right: 4px solid rgba(205, 225, 225, .7); padding-right: 1px; }
.clips li.current { border-color: #c79ad5; }
.clips .ghost { position: absolute; left: 0; top: 0; width: 100%; height: 100%; color: rgba(20, 25, 30, .2); }
.clips .ico { position: relative; width: 15px; height: 14px; }
.clips span { position: relative; }
.picker-scroll { width: 15px; background: #302d43; border-left: 1px solid #1f1c38; border-right: 1px solid #1f1c38; }
.picker-scroll i { display: block; height: 14px; background: #4b485f; border: 1px solid #28253a; }
.arrange { flex: 1; min-width: 0; display: flex; flex-direction: column; border-left: 5px solid #39364d; }
.arrange-head { display: flex; height: 40px; }
.corner { width: 112px; flex: none; display: flex; background: #47455b; border: 1px solid #2f2c42; border-radius: 10px 0 0 0; }
.corner > button { width: 30px; font-size: 16px; border-right: 1px solid #2f2c42; align-items: flex-end; padding-bottom: 1px; }
.corner-grid { flex: 1; display: grid; grid-template-columns: repeat(3, 1fr); justify-items: center; align-items: center; }
.corner-grid svg { width: 16px; height: 13px; }
.corner-grid .x { width: 9px; height: 9px; }
.timeline { flex: 1; min-width: 0; }
.minimap { display: flex; height: 21px; background: #39364c; }
.minimap button { width: 19px; flex: none; background: #47445b; border: 1px solid #555168; color: #28253a; }
.minimap button svg { width: 11px; height: 11px; }
.map { flex: 1; min-width: 0; height: 21px; }
.flip { transform: rotate(180deg); }
.rot-up { transform: rotate(-90deg); }
.rot-down { transform: rotate(90deg); }
.ruler { position: relative; height: 19px; background: #1b1838; border-bottom: 1px solid #0c0a26; }
.marker { position: absolute; left: 206px; top: 1px; border: 7px solid transparent; border-top: 10px solid #e08cc8; border-bottom: 0; }
.scroll-top { width: 20px; }
.scroll-top button, .vscroll button { width: 20px; height: 20px; background: #4a475e; border: 1px solid #322f44; color: #29263b; }
.scroll-top svg, .vscroll svg { width: 12px; height: 12px; }
.scroll-top b { width: 3px; height: 4px; background: #28253a; }
.arrange-body { flex: 1; min-height: 0; display: flex; }
.tracks { flex: 1; min-width: 0; overflow: hidden; }
.vscroll { width: 20px; display: flex; flex-direction: column; justify-content: space-between; background: #333047; border-left: 1px solid #201d33; }
.vscroll i { height: 33px; background: #47445b; }
.track { display: flex; height: 56px; border-bottom: 2px solid #0b0929; }
.track-head { width: 102px; flex: none; display: flex; justify-content: space-between; padding: 0 5px 3px 3px; background: linear-gradient(#49485d, #403e54); border-left: 1px solid #26233a; border-top: 1px solid #4f4d63; font: 300 15px/17px var(--narrow); color: #c4c2d2; }
.track-head i { align-self: flex-end; width: 9px; height: 9px; border-radius: 50%; border: 2px solid #24213a; background: #aaa8bd; box-shadow: 0 0 0 1px #77758b; }
.strip { width: 9px; flex: none; background: linear-gradient(90deg, #8882b5, #9d96cc); border-right: 1px solid #201d33; }
.lane { position: relative; flex: 1; min-width: 0; background: #222244; display: flex; flex-direction: column; border-right: 1px solid #111; }
.lane::before { content: ""; position: absolute; left: 204px; top: 15px; bottom: 0; width: 10px; background: linear-gradient(90deg, transparent, rgba(130, 50, 140, .35)); border-right: 1px solid #87578d; }
.empty .strip { background: #34324a; }
.empty .lane { background: repeating-linear-gradient(90deg, transparent 0 191px, #232047 191px 192px) -23px 0 / calc(100% + 23px) 100%, #302d57; }
.empty .lane::before { left: 174px; top: 0; width: 10px; background: linear-gradient(90deg, transparent, rgba(160, 50, 160, .6)); border-right: 2px solid #c673cd; }
.clip-head { display: flex; height: 15px; flex: none; }
.clip-name { flex: 1; min-width: 0; display: flex; align-items: center; gap: 3px; padding-left: 3px; background: linear-gradient(rgba(255, 255, 255, .06), rgba(0, 0, 0, .05)), var(--c); color: #ccd6d4; font: 300 14px/15px var(--narrow); white-space: nowrap; }
.clip-name svg { width: 8px; height: 7px; color: #e4eee8; }
.clip-name.second { flex: 0 0 203px; border-left: 1px solid #282440; gap: 4px; padding-left: 2px; }
.lane .wf { width: 100%; height: 39px; }
.db { position: absolute; left: 661px; top: 22px; width: 38px; height: 19px; border-radius: 4px; background: linear-gradient(rgba(35, 35, 55, .45), rgba(35, 35, 55, .45)), var(--c); color: #e8eae8; text-align: center; text-shadow: none; font: 700 11px/19px var(--narrow-bold); }
.dot { position: absolute; left: 675px; bottom: 0; width: 10px; height: 5px; border-radius: 5px 5px 0 0; background: #d4d4d4; }
```
FILE: script.js
```js
// seeded noise so that every load draws the same waves
let seed = 7;
const rnd = () => (seed = (seed * 16807) % 2147483647) / 2147483647;

const ampAt = (env, x) => {
  for (let i = 1; i < env.length; i++) {
    if (x <= env[i][0]) {
      const [x0, a0] = env[i - 1], [x1, a1] = env[i];
      return a0 + (a1 - a0) * (x - x0) / (x1 - x0 || 1);
    }
  }
  return env[env.length - 1][1];
};

// zigzag inside an amplitude envelope; step is half a period
const zig = (env, step, noise = 0.5) => {
  let d = '', s = 1;
  for (let x = env[0][0]; x <= env[env.length - 1][0]; x += step) {
    const a = ampAt(env, x) * (1 - noise * rnd());
    d += (d ? 'L' : 'M') + x.toFixed(1) + ' ' + (21 + s * a).toFixed(1);
    s = -s;
  }
  return d;
};

// smooth curve through given points, y measured from the centre line
const curve = pts => {
  let d = `M${pts[0][0]} ${21 + pts[0][1]}`;
  for (let i = 1; i < pts.length; i++) {
    const m = (pts[i - 1][0] + pts[i][0]) / 2;
    d += `C${m} ${21 + pts[i - 1][1]} ${m} ${21 + pts[i][1]} ${pts[i][0]} ${21 + pts[i][1]}`;
  }
  return d;
};

const swing = (env, step) => {
  const pts = [];
  let s = 1;
  for (let x = 0; x <= 1360 + step; x += step) {
    pts.push([x, s * ampAt(env, x) * (0.75 + 0.25 * rnd())]);
    s = -s;
  }
  return curve(pts);
};

const path = (d, w = 1.4) => `<path d="${d}" fill="none" stroke="currentColor" stroke-width="${w}"/>`;
const flat = '<path d="M0 20h1360v1H0z"/>';

const tracks = [
  ['kanashii kurai diamond[bass] (1)', '#586b76', '#b5b2da', '-4.0dB',
    () => path(swing([[0, 4], [60, 5], [90, 3], [210, 2], [230, 3], [340, 3], [355, 0.5], [375, 0.5], [385, 5], [660, 5], [740, 5], [780, 1], [820, 5], [1080, 4], [1100, 1], [1130, 2], [1160, 5], [1360, 5]], 6.5), 1.3)],
  ['KANASHII KURAI DIAMOND', '#649343', '#c3ea90', '-1.3dB',
    () => flat + path(zig([[0, 2.5], [300, 3], [350, 4], [380, 2], [530, 2], [545, 7], [580, 4], [610, 3], [740, 3], [790, 7], [850, 6], [890, 2], [910, 6], [995, 8], [1040, 5], [1080, 3], [1220, 6], [1290, 3], [1360, 6]], 1.3))],
  ['S DRUMS', '#596f61', '#bed2c6', '-2.0dB',
    () => flat + path(zig([[0, 2], [60, 1], [340, 1], [365, 6], [388, 5], [392, 14], [400, 10], [404, 4]], 1, 0.4)) +
      path(curve([[393, -14], [400, 11], [406, -14], [412, 14], [421, -11], [428, 4], [431, -6], [439, 8], [454, -6], [472, 6], [495, -7], [515, 4], [537, -4], [559, 2], [582, -2], [615, 0]]), 2.4) +
      path(zig([[740, 1], [775, 3], [850, 1]], 1)) + path(zig([[1148, 2], [1160, 14], [1168, 8]], 1)) +
      path(curve([[993, 0], [1002, 3], [1008, -2], [1015, 3], [1027, -3], [1040, 3], [1052, -2], [1075, -2], [1089, 4], [1106, -4], [1123, 3], [1137, -2], [1150, 1]]), 1.6) +
      path(curve([[1166, 0], [1168, 8], [1173, -9], [1182, 8], [1193, -9], [1206, 7], [1223, -6], [1240, 6], [1260, -5], [1282, 4], [1305, -4], [1327, 3], [1345, -1], [1360, 0]]), 2)],
  ['Mitski - Nobody (Lyric Video)', '#69655a', '#c6c1ba', '-4.9dB',
    () => flat + path(zig([[10, 0], [30, 2], [70, 0]], 1)) + path(zig([[205, 0], [220, 1], [245, 0]], 1)) + path(zig([[398, 2], [402, 5], [430, 6], [455, 3], [500, 1], [545, 0]], 1)) + path(zig([[590, 0], [605, 1], [620, 0]], 1)) + path(zig([[785, 0], [800, 2], [838, 0]], 1)) + path(zig([[1165, 0], [1185, 5], [1220, 5], [1245, 3], [1330, 0]], 1))],
  null,
  ['Vanessa Hudgens - Sneakernight (ACAPELLA)', '#57706a', '#b7cdc5', '1.5dB',
    () => flat + path(zig([[0, 11], [30, 12], [150, 10], [175, 4], [210, 9], [230, 4], [255, 9], [280, 4], [300, 9], [390, 9], [480, 12], [520, 16], [540, 9], [550, 18], [590, 16], [660, 12], [700, 3], [735, 2], [800, 6], [855, 18], [900, 16], [940, 9], [965, 4], [1005, 0.5], [1050, 2], [1085, 6], [1110, 3], [1165, 1], [1180, 9], [1220, 14], [1260, 10], [1360, 14]], 2, 0.35), 1.8)],
  ['Junko Ohashi - Telephone Number (1984) (Vocals) (MDX v2 Voc FT)', '#5a556d', '#a9a4cb', '',
    () => path(zig([[0, 5], [50, 4], [65, 2], [120, 5], [180, 6], [220, 3], [330, 4], [520, 3], [590, 6], [680, 4], [800, 1.5], [850, 4], [1150, 5], [1300, 5], [1360, 4]], 1.3, 0.1), 1.4)],
  null,
  ['[Clean Acapella] tripleS - Girls Never Die', '#566871', '#b8c9d8', '',
    () => flat + path(zig([[1060, 0], [1130, 1], [1150, 1], [1170, 4], [1200, 3]], 3, 0.2), 1.5) + path(zig([[1200, 3], [1240, 4], [1360, 4]], 0.8))],
  ['(Music Video) Chonny Jash - The Forest for the Trees', '#5a546c', '#b8b3d6', '',
    () => flat + path(zig([[0, 4], [100, 5], [200, 3], [260, 2], [390, 2], [430, 3], [470, 2], [680, 3], [900, 3], [1050, 4], [1150, 3], [1160, 6], [1220, 4], [1360, 2]], 1.6), 1.7)],
  ['Banana Man (Tally Hall Cover)', '#526b70', '#bacddb', '9.4dB',
    () => flat + path(zig([[0, 1.5], [380, 1], [390, 4], [430, 6], [450, 4], [530, 3], [680, 4], [720, 2], [775, 1], [780, 4], [830, 2], [890, 4], [980, 2], [1010, 4], [1080, 3], [1150, 2], [1360, 1.5]], 2.5, 0.3), 1.5)],
  ['Ariana_Grande_-_3435_official_instrumental_no_drums', '#576b5b', '#bdccc8', '-1.2dB',
    () => flat + path(zig([[0, 5], [12, 2], [25, 5], [100, 4], [200, 1], [330, 0.5], [375, 1], [380, 6], [405, 2], [440, 4], [490, 1], [680, 0.5], [755, 0.5], [775, 8], [800, 6], [850, 3], [1000, 2], [1360, 1.5]], 3, 0.25), 1.5)],
  ['Frankie O Generator - Dance To The Rhythm', '#566970', '#b8cbd8', '-1.9dB',
    () => flat + path(zig([[6, 0], [15, 10], [35, 6], [90, 6], [180, 4], [215, 1], [380, 1], [392, 6], [405, 3], [575, 3], [585, 7], [620, 5], [670, 4], [765, 3], [775, 6], [800, 3], [950, 3], [965, 6], [1000, 4], [1155, 4], [1170, 11], [1200, 7], [1360, 5]], 1.1), 1.6)],
  null,
  ['C. P.  & Bernard Laroche - Nostalgie In Blue', '#546671', '#b8cbd8', '',
    () => flat + path(zig([[0, 4], [18, 2], [60, 2], [80, 5], [120, 6], [180, 5], [240, 3], [290, 2]], 1.3), 1.6) + path(zig([[240, 3], [500, 3], [760, 3], [880, 3], [950, 1.5], [1060, 1.5], [1100, 3], [1360, 3]], 4, 0.8), 1.6)],
  ['Love Is The Way (Drums) (Demucs V4)', '#684e66', '#c8b2d1', '-5.8dB',
    () => flat + path(zig([[0, 2], [50, 1.5], [380, 0.5], [390, 5], [403, 11], [425, 8], [445, 6], [480, 3], [520, 1.5], [640, 0]], 1.4, 0.4), 1.5) +
      path(curve([[778, 0], [781, 7], [784, -6], [787, 8], [791, -9], [795, 10], [798, -8], [802, 4], [806, -3], [810, -6], [813, 2], [816, -6], [821, 6], [829, 6], [834, -7], [841, 5], [847, 6], [852, -4], [858, -5], [870, 7], [877, -4], [887, 0], [910, -3], [925, 2], [938, 4], [954, -2], [965, 1], [1000, 0], [1050, -1], [1080, 0]]), 2.2) + path(zig([[1175, 0], [1200, 2], [1280, 0]], 1))],
  ['worth it', '#555267', '#b4b2cc', '-3.7dB',
    () => '<path d="M0 19h240v2H0z"/>' + flat + path(zig([[0, 3], [110, 2], [120, 0], [360, 0], [430, 4], [490, 0], [725, 0], [750, 3], [880, 2], [890, 0], [1090, 0], [1110, 3], [1360, 3]], 1.5, 0.3))]
];

const use = (id, cls = '') => `<svg${cls && ` class="${cls}"`}><use href="#${id}"/></svg>`;
const esc = t => t.replace(/&/g, '&amp;');

document.querySelector('.tracks').innerHTML = tracks.map((t, i) => {
  const head = `<div class="track-head">Track ${i + 1}<i></i></div><div class="strip"></div>`;
  if (!t) return `<div class="track empty">${head}<div class="lane"></div></div>`;
  const [name, color, wave, db, draw] = t;
  return `<div class="track" style="--c:${color}">${head}<div class="lane">
    <div class="clip-head"><div class="clip-name">${use('clip')}${esc(name)}</div>${i === 9 ? `<div class="clip-name second">${use('clip')}(Music Video) Chonny J..orest for the Trees</div>` : ''}</div>
    <svg class="wf" viewBox="0 0 1360 39" preserveAspectRatio="none" style="color:${wave}">${draw()}</svg>
    ${db ? `<span class="db">${db}</span>` : ''}${i === 2 ? '<i class="dot"></i>' : ''}</div></div>`;
}).join('');

const clips = [
  ['kanashii kurai diamo..', '#5d7580', 1], ['kanashii kurai diamo..', '#755d66'], ['KANASHII KURAI DIA..', '#7fb358', 1],
  ['kanashii kurai diamo..', '#5c7780'], ['S DRUMS', '#65806f', 1], ['Mitski - Nobody (Lyri..', '#747263', 1],
  ['Juggler (Vocals) (MD..', '#78586a'], ['[Clean Acapella] tripl..', '#5d7182', 1], ["K.K. Cruisin' (ACNH)", '#757b68'],
  ['(Music Video) Chonny..', '#696480', 1], ['Banana Man (Tally H..', '#54767c', 1], ['WIL DRUMSD', '#75566e'],
  ['Ariana_Grande_-_34..', '#5e7b72', 1], ['Junko Ohashi - Telep..', '#69658a', 1], ['short hair acapella', '#567355'],
  ['Frankie O Generator..', '#607b82', 1], ['C. P.  & Bernard Laroc..', '#64777c', 1], ['recording-5-16-202..', '#6d6482'],
  ['Love Is The Way (Dru..', '#785366', 1], ['Katy Perry - Wide Aw..', '#557663'], ['worth it', '#666985', 1],
  ['worthless rat', '#73805f'], ["KATSEYE - 'Touch' (Vo..", '#696c5c'], ['NICHE FOREVER', '#567a73'], ['Vanessa Hudgens - S..', '#567a6d', 1]
];
const ghost = () => {
  let top = '', bottom = '';
  for (let x = 5; x <= 130; x += 2) {
    const a = 7 + 4 * rnd();
    top += `L${x} ${13 - a}`;
    bottom = `L${x} ${13 + a}` + bottom;
  }
  return `<svg class="ghost" viewBox="0 0 134 26" preserveAspectRatio="none"><path d="M4 13${top}${bottom}z"/></svg>`;
};
document.querySelector('.clips').innerHTML = clips.map(([name, c, used], i) =>
  `<li class="${used ? 'used' : ''}${i === 24 ? ' current' : ''}" style="--c:${c}">${ghost()}<span>${esc(name)}</span>${use('wave', 'ico')}</li>`).join('');

const s = 'camaSnare ST25';
const files = [
  ['Sink Sploosh', 'd2'], ['Tub Drain', 'd2'], ['Tub Fill', 'd2 open'],
  ...[1, 2, 3, 4, 5].map(n => [`Tub Fill ${n}`, 'file deep']),
  ['ADHARA-20260104T040210Z-3-001', 'open'], ['ADHARA', 'd1'], ['Aegis Cloudpack', ''], ['AMEN DRUM KIT', ''], ['Anime SFX VOL1', ''],
  ['BEEJ BEDROOM POP DRUM KIT', ''], ['breakcore is not a..od way to get laid', ''], ['CamaCon Snaretober 2025 Pack', 'open'],
  ['Layers', 'd1'], ['Mudpies', 'd1'],
  ...[' - 1. Vital Only v1 - A', ' - 1. Vital Only v2 - E', ' - 1. Vital Only v3 - E', ' -..und.org Pan v1 - G', ' -..und.org Pan v2 - E',
    ' -..und.org Pan v3 - C', ' - 3. ISOxo Snare - A', ' - 4. Trap Snare v1', ' - 4. Trap Snare v2', ' - 5. Riddim Doof - E',
    ' -..hin Rim Recreation', '..m Amp Spam v1 - D', '..m Amp Spam v2 - E', '..m Amp Spam v3 - A', ' -..c Brostep Snare - A',
    ' - 9. Big Ass Doof - D', ' -... Unison Metal - E', ' -..s Snare v1 - Dmin', ' -..s Snare v2 - Dmin', ' -..upid Pan Snare - D',
    ' -..ie Combs Clank v1', ' -..ie Combs Clank v2', ' -..ie Combs Clank v3', ' -..ie Combs Clank v4'].map(t => [s + t, 'file'])
];
document.querySelector('.files').innerHTML = files.map(([t, c]) =>
  `<li class="${c}">${use(c.startsWith('file') ? 'sample' : 'folder')}<span>${t}</span></li>`).join('');

// output scope
let sc = 'M0 17';
for (let x = 1; x < 86; x += 2) sc += `L${x} ${(17 + (rnd() - 0.5) * (x % 3 ? 12 : 22)).toFixed(1)}`;
document.querySelector('.scope').innerHTML = path(sc, 1.5);

// song overview
let map = '<path d="M0 1h1149v2H0z" fill="#566b58"/><path d="M70 3h1060v2H70z" fill="#4d6150"/>';
for (let i = 0; i < 90; i++) {
  const x = 200 + rnd() * 860, y = 6 + Math.floor(rnd() * 6) * 2;
  map += `<path d="M${x.toFixed(0)} ${y}h${(30 + rnd() * 90).toFixed(0)}v1h-60z" fill="#5c5a6c"/>`;
}
map += '<path d="M865 1h3v17h-3z" fill="#a9a1ab"/>';
document.querySelector('.map').innerHTML = map;
```
